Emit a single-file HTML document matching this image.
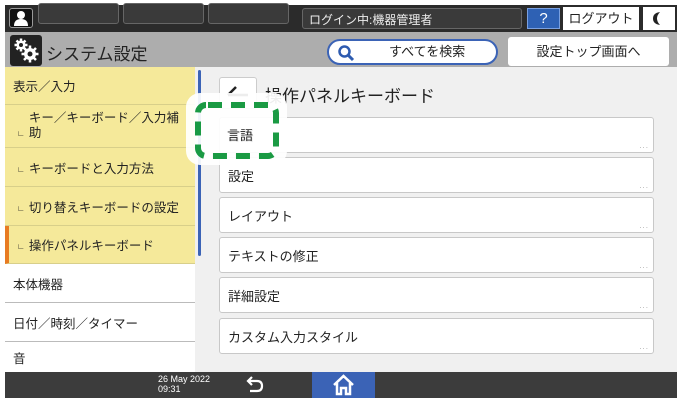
<!DOCTYPE html><html><head><meta charset="utf-8"><style>
*{margin:0;padding:0;box-sizing:border-box}
body{width:680px;height:404px;background:#fff;position:relative;overflow:hidden;font-family:"Liberation Sans","Noto Sans CJK JP",sans-serif;color:#222}
.a{position:absolute}
.top{left:5px;top:5px;width:672px;height:27px;background:#2b2b2b}
.tb{top:3px;height:21px;border:1px solid #666;border-radius:3px;background:#3a3a3a}
.hdr{left:5px;top:32px;width:672px;height:35px;background:#adadad}
.li{left:5px;width:190px;font-size:12.5px;padding-left:8px;display:flex;align-items:center;border-bottom:1px solid #d8cf8a}
.y{background:#f5e99a}
.w{background:#fff;border-bottom:1px solid #bbb}
.m{font-size:8px;margin-right:4px;position:relative;top:2px}
.btn{left:219px;width:435px;height:36px;background:#fff;border:1px solid #c8c8c8;border-radius:3px;font-size:13px;padding-left:8px;display:flex;align-items:center}
.btn:after{content:"...";position:absolute;right:4px;bottom:2px;font-size:8px;color:#aaa;letter-spacing:1px}
</style></head><body>
<div class="a top"></div>
<div class="a" style="left:9px;top:8px;width:24px;height:20px;background:#111;border:1px solid #999;border-radius:3px">
<svg width="22" height="18" viewBox="0 0 22 18"><circle cx="11" cy="6" r="4" fill="#fff"/><path d="M4 17 Q4 10 11 10 Q18 10 18 17Z" fill="#fff"/></svg></div>
<div class="a tb" style="left:38px;width:81px"></div>
<div class="a tb" style="left:123px;width:81px"></div>
<div class="a tb" style="left:208px;width:81px"></div>
<div class="a tb" style="left:302px;width:220px;top:8px;color:#eee;font-size:12px;padding:2px 0 0 6px">ログイン中:機器管理者</div>
<div class="a" style="left:527px;top:8px;width:33px;height:21px;background:#2e61b4;border:1px solid #7aa0e0;color:#fff;font-size:15px;text-align:center;line-height:19px">?</div>
<div class="a" style="left:563px;top:7px;width:76px;height:23px;background:#fff;font-size:13px;text-align:center;line-height:23px">ログアウト</div>
<div class="a" style="left:643px;top:7px;width:32px;height:23px;background:#fff"><svg width="32" height="23" viewBox="0 0 32 23"><path d="M17 5 Q11 11.5 17 18 Q10 17 10 11.5 Q10 6 17 5Z" fill="#222"/></svg></div>
<div class="a hdr"></div>
<div class="a" style="left:10px;top:35px;width:32px;height:31px;background:#222;border-radius:3px">
<svg width="32" height="31" viewBox="0 0 32 31"><g fill="#fff"><circle cx="11" cy="10" r="4.5"/><circle cx="20" cy="19" r="6"/></g><g stroke="#fff" stroke-width="2.5"><path d="M11 3.5V16.5M4.5 10H17.5M6.5 5.5L15.5 14.5M15.5 5.5L6.5 14.5"/><path d="M20 10.5V27.5M11.5 19H28.5M14 13L26 25M26 13L14 25"/></g><circle cx="11" cy="10" r="2" fill="#222"/><circle cx="20" cy="19" r="2.5" fill="#222"/></svg></div>
<div class="a" style="left:46px;top:40px;font-size:17px">システム設定</div>
<div class="a" style="left:327px;top:39px;width:171px;height:26px;background:#fff;border:2px solid #3b63b6;border-radius:13px;font-size:13px;line-height:22px"><svg class="a" style="left:8px;top:3px" width="18" height="18" viewBox="0 0 18 18"><circle cx="7.5" cy="7.5" r="5" fill="none" stroke="#2e5bb0" stroke-width="2.5"/><path d="M11 11L16 16" stroke="#2e5bb0" stroke-width="3"/></svg><span style="margin-left:60px">すべてを検索</span></div>
<div class="a" style="left:508px;top:37px;width:161px;height:29px;background:#fff;border-radius:3px;font-size:13px;text-align:center;line-height:29px">設定トップ画面へ</div>
<div class="a" style="left:195px;top:67px;width:482px;height:305px;background:#f0f0f0"></div>
<div class="a" style="left:198px;top:70px;width:3px;height:186px;background:#3b63b6;border-radius:2px"></div>
<div class="a li y" style="top:67px;height:38px">表示／入力</div>
<div class="a li y" style="top:105px;height:43px;line-height:15px;align-items:center;padding-left:12px"><span class="m" style="top:7px">∟</span><span>キー／キーボード／入力補<br>助</span></div>
<div class="a li y" style="top:148px;height:39px;padding-left:12px"><span class="m">∟</span>キーボードと入力方法</div>
<div class="a li y" style="top:187px;height:39px;padding-left:12px"><span class="m">∟</span>切り替えキーボードの設定</div>
<div class="a li y" style="top:226px;height:38px;border-left:4px solid #e87b22;padding-left:8px"><span class="m">∟</span>操作パネルキーボード</div>
<div class="a li w" style="top:264px;height:39px">本体機器</div>
<div class="a li w" style="top:303px;height:39px">日付／時刻／タイマー</div>
<div class="a li w" style="top:342px;height:30px;border:none">音</div>
<div class="a" style="left:219px;top:77px;width:38px;height:32px;background:#fff;border:1px solid #ccc;border-radius:3px"><svg width="36" height="30" viewBox="0 0 36 30"><path d="M8 17H28M8 17L16 9" stroke="#222" stroke-width="2.5" fill="none"/></svg></div>
<div class="a" style="left:265px;top:82px;font-size:17px">操作パネルキーボード</div>
<div class="a btn" style="top:117px">言語</div>
<div class="a btn" style="top:157px">設定</div>
<div class="a btn" style="top:197px">レイアウト</div>
<div class="a btn" style="top:237px">テキストの修正</div>
<div class="a btn" style="top:277px">詳細設定</div>
<div class="a btn" style="top:318px">カスタム入力スタイル</div>
<div class="a" style="left:186px;top:93px;width:101px;height:72px;background:#fff;border-radius:14px;opacity:.92"></div>
<svg class="a" style="left:193px;top:100px" width="90" height="60" viewBox="0 0 90 60"><rect x="5" y="5" width="78" height="51" rx="8" fill="none" stroke="#1a9a43" stroke-width="6" stroke-dasharray="14 9" stroke-dashoffset="-2"/></svg>
<div class="a" style="left:227px;top:125px;font-size:13px">言語</div>
<div class="a" style="left:5px;top:372px;width:672px;height:26px;background:#3c3c3c"></div>
<div class="a" style="left:158px;top:374px;color:#fff;font-size:9px;line-height:10px">26 May 2022<br>09:31</div>
<svg class="a" style="left:242px;top:375px" width="24" height="20" viewBox="0 0 24 20"><path d="M7 6H15Q20 6 20 11Q20 16 15 16H8M10 2L6 6L10 10" stroke="#fff" stroke-width="2.2" fill="none"/></svg>
<div class="a" style="left:312px;top:372px;width:63px;height:26px;background:#3b63b6"><svg width="63" height="26" viewBox="0 0 63 26"><path d="M22 13 L31.5 4 L41 13 M25 11 V22 H29 V16 H34 V22 H38 V11" fill="none" stroke="#fff" stroke-width="2.5"/></svg></div>
</body></html>
